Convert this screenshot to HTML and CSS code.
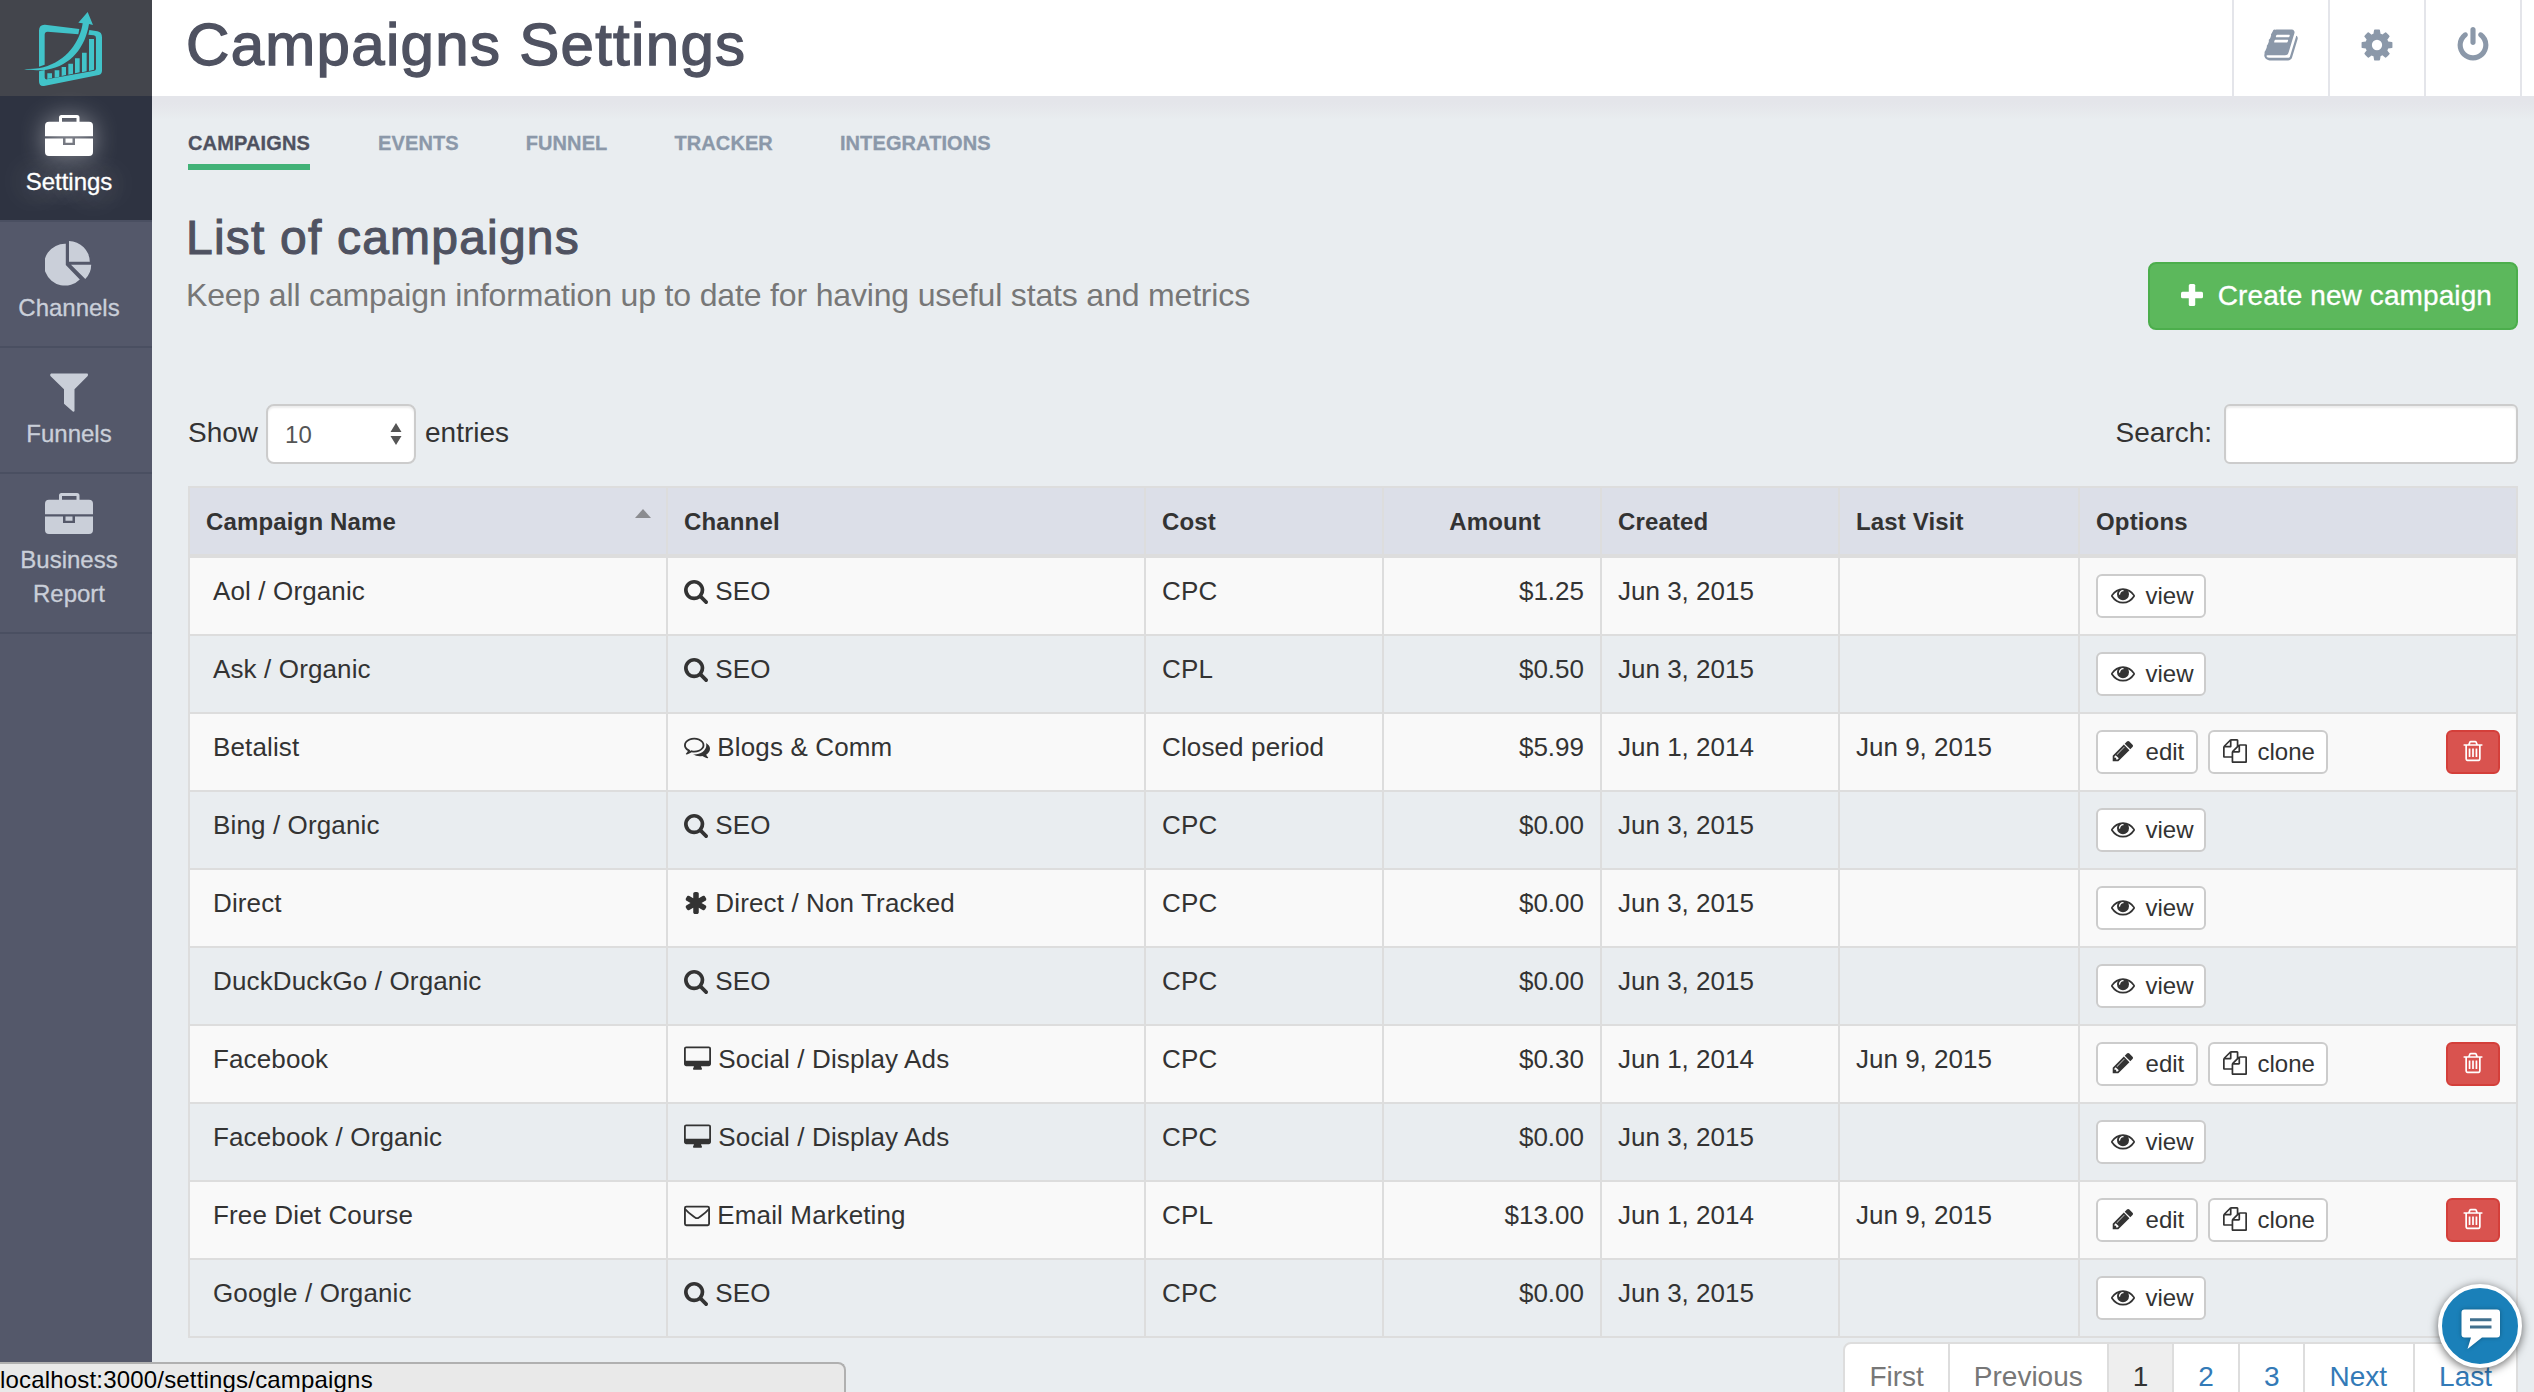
FILE: index.html
```html
<!DOCTYPE html>
<html lang="en">
<head>
<meta charset="utf-8">
<title>Campaigns Settings</title>
<link rel="stylesheet" href="styles.css">
</head>
<body>
<svg class="sprite" aria-hidden="true">
  <symbol id="i-search" viewBox="64 0 1664 1792"><path d="M1216 832q0-185-131.5-316.5t-316.5-131.5-316.5 131.5-131.5 316.5 131.5 316.5 316.5 131.5 316.5-131.5 131.5-316.5zm512 832q0 52-38 90t-90 38q-54 0-90-38l-343-342q-179 124-399 124-143 0-273.5-55.5t-225-150-150-225-55.5-273.5 55.5-273.5 150-225 225-150 273.5-55.5 273.5 55.5 225 150 150 225 55.5 273.5q0 220-124 399l343 343q37 37 37 90z"/></symbol>
  <symbol id="i-asterisk" viewBox="64 0 1664 1792"><path d="M1546 1050q46 26 59.5 77.5t-12.5 97.5l-64 110q-26 46-77.5 59.5t-97.5-12.5l-266-153v307q0 52-38 90t-90 38h-128q-52 0-90-38t-38-90v-307l-266 153q-46 26-97.5 12.5t-77.5-59.5l-64-110q-26-46-12.5-97.5t59.5-77.5l266-154-266-154q-46-26-59.5-77.5t12.5-97.5l64-110q26-46 77.5-59.5t97.5 12.5l266 153v-307q0-52 38-90t90-38h128q52 0 90 38t38 90v307l266-153q46-26 97.5-12.5t77.5 59.5l64 110q26 46 12.5 97.5t-59.5 77.5l-266 154z"/></symbol>
  <symbol id="i-comments" viewBox="0 0 1792 1792"><path d="M704 384q-153 0-286 52t-211.5 141-78.5 191q0 82 53 158t149 132l97 56-35 84q34-20 62-39l44-31 53 10q78 14 153 14 153 0 286-52t211.5-141 78.5-191-78.5-191-211.5-141-286-52zm0-128q191 0 353.5 68.5t256.5 186.5 94 257-94 257-256.5 186.5-353.5 68.5q-86 0-176-16-124 88-278 128-36 9-86 16h-3q-11 0-20.5-8t-11.5-21q-1-3-1-6.5t.5-6.5 2-6l2.5-5 3.5-5.500 4-5 4.500-5 4-4.500q5-6 23-25t26-29.500 22.500-29 25-38.500 20.500-44q-124-72-195-177t-71-224q0-139 94-257t256.500-186.500 353.500-68.500zm822 1169q10 24 20.500 44t25 38.500 22.500 29 26 29.500 23 25q1 1 4 4.500t4.500 5 4 5 3.500 5.500l2.500 5 2 6 .5 6.500-1 6.500q-3 14-13 22t-22 7q-50-7-86-16-154-40-278-128-90 16-176 16-271 0-472-132 58 4 88 4 161 0 309-45t264-129q125-92 192-212t67-254q0-77-23-152 129 71 204 178t75 230q0 120-71 224.500t-195 176.500z"/></symbol>
  <symbol id="i-desktop" viewBox="0 0 1920 1792"><path d="M1792 992v-832q0-13-9.5-22.5t-22.5-9.5h-1600q-13 0-22.5 9.5t-9.5 22.5v832q0 13 9.5 22.5t22.5 9.5h1600q13 0 22.5-9.5t9.5-22.5zm128-832v1088q0 66-47 113t-113 47h-544q0 37 16 77.5t32 71 16 43.5q0 26-19 45t-45 19h-512q-26 0-45-19t-19-45q0-14 16-44t32-70 16-78h-544q-66 0-113-47t-47-113v-1088q0-66 47-113t113-47h1600q66 0 113 47t47 113z"/></symbol>
  <symbol id="i-envelope" viewBox="0 0 1792 1792"><g fill="none" stroke="currentColor" stroke-width="128"><rect x="64" y="320" width="1664" height="1280" rx="96"/><path d="M90 500C300 760 560 900 760 1060Q896 1160 1032 1060C1232 900 1492 760 1702 500"/></g></symbol>
  <symbol id="i-eye" viewBox="0 0 1792 1792"><path d="M1664 960q-152-236-381-353 61 104 61 225 0 185-131.5 316.5t-316.5 131.5-316.5-131.5-131.5-316.5q0-121 61-225-229 117-381 353 133 205 333.5 326.5t434.5 121.5 434.5-121.5 333.5-326.5zm-720-384q0-20-14-34t-34-14q-125 0-214.5 89.5t-89.5 214.5q0 20 14 34t34 14 34-14 14-34q0-86 61-147t147-61q20 0 34-14t14-34zm848 384q0 34-20 69-140 230-376.5 368.5t-499.5 138.5-499.5-139-376.5-368q-20-35-20-69t20-69q140-229 376.5-368t499.5-139 499.5 139 376.5 368q20 35 20 69z"/></symbol>
  <symbol id="i-pencil" viewBox="0 0 1792 1792"><path d="M491 1536l91-91-235-235-91 91v107h128v128h107zm523-928q0-22-22-22-10 0-17 7l-542 542q-7 7-7 17 0 22 22 22 10 0 17-7l542-542q7-7 7-17zm-54-192l416 416-832 832h-416v-416zm683 96q0 53-37 90l-166 166-416-416 166-165q36-38 90-38 53 0 91 38l235 234q37 39 37 91z"/></symbol>
  <symbol id="i-files" viewBox="0 0 1792 1792"><path d="M1696 384q40 0 68 28t28 68v1216q0 40-28 68t-68 28h-960q-40 0-68-28t-28-68v-288h-544q-40 0-68-28t-28-68v-672q0-40 20-88t48-76l408-408q28-28 76-48t88-20h416q40 0 68 28t28 68v328q68-40 128-40h416zm-544 213l-299 299h299v-299zm-640-384l-299 299h299v-299zm196 647l316-316v-416h-384v416q0 40-28 68t-68 28h-416v640h512v-256q0-40 20-88t48-76zm956 804v-1152h-384v416q0 40-28 68t-68 28h-416v640h896z"/></symbol>
  <symbol id="i-trash" viewBox="0 0 1792 1792"><path d="M704 736v576q0 14-9 23t-23 9h-64q-14 0-23-9t-9-23v-576q0-14 9-23t23-9h64q14 0 23 9t9 23zm256 0v576q0 14-9 23t-23 9h-64q-14 0-23-9t-9-23v-576q0-14 9-23t23-9h64q14 0 23 9t9 23zm256 0v576q0 14-9 23t-23 9h-64q-14 0-23-9t-9-23v-576q0-14 9-23t23-9h64q14 0 23 9t9 23zm128 724v-948h-896v948q0 22 7 40.5t14.5 27 10.5 8.5h832q3 0 10.5-8.5t14.5-27 7-40.5zm-672-1076h448l-48-117q-7-9-17-11h-317q-10 2-17 11zm928 32v64q0 14-9 23t-23 9h-96v948q0 83-47 143.5t-113 60.5h-832q-66 0-113-58.5t-47-141.5v-952h-96q-14 0-23-9t-9-23v-64q0-14 9-23t23-9h309l70-167q15-37 54-63t79-26h320q40 0 79 26t54 63l70 167h309q14 0 23 9t9 23z"/></symbol>
  <symbol id="i-plus" viewBox="0 0 1792 1792"><rect x="192" y="690" width="1408" height="412" rx="96"/><rect x="690" y="192" width="412" height="1408" rx="96"/></symbol>
  <symbol id="i-book" viewBox="0 0 1792 1792"><path d="M1703 478q40 57 18 129l-275 906q-19 64-76.5 107.5t-122.5 43.5h-923q-77 0-148.5-53.5t-99.5-131.5q-24-67-2-127 0-4 3-27t4-37q1-8-3-21.5t-3-19.5q2-11 8-21t16.5-23.5 16.5-23.5q23-38 45-91.5t30-91.5q3-10 .5-30t-.5-28q3-11 17-28t17-23q21-36 42-92t25-90q1-9-2.5-32t.5-28q4-13 22-30.5t22-22.5q19-26 42.5-84.5t27.5-96.5q1-8-3-25.5t-2-26.5q2-8 9-18t18-23 17-21q8-12 16.5-30.5t15-35 16-36 19.5-32 26.5-23.5 36-11.5 47.5 5.5l-1 3q38-9 51-9h761q74 0 114 56t18 130l-274 906q-36 119-71.5 153.5t-128.5 34.5h-869q-27 0-38 15-11 16-1 43 24 70 144 70h923q29 0 56-15.5t35-41.5l300-987q7-22 5-57 38 15 59 43zm-1064 2q-4 13 2 22.5t20 9.5h608q13 0 25.5-9.5t16.5-22.5l21-64q4-13-2-22.5t-20-9.5h-608q-13 0-25.5 9.5t-16.5 22.5zm-83 256q-4 13 2 22.5t20 9.5h608q13 0 25.5-9.5t16.5-22.5l21-64q4-13-2-22.5t-20-9.5h-608q-13 0-25.5 9.5t-16.5 22.5z"/></symbol>
  <symbol id="i-cog" viewBox="0 0 1792 1792"><path d="M1152 896q0-106-75-181t-181-75-181 75-75 181 75 181 181 75 181-75 75-181zm512-109v222q0 12-8 23t-20 13l-185 28q-19 54-39 91 35 50 107 138 10 12 10 25t-9 23q-27 37-99 108t-94 71q-12 0-26-9l-138-108q-44 23-91 38-16 136-29 186-7 28-36 28h-222q-14 0-24.5-8.5t-11.5-21.5l-28-184q-49-16-90-37l-141 107q-10 9-25 9-14 0-25-11-126-114-165-168-7-10-7-23 0-12 8-23 15-21 51-66.5t54-70.5q-27-50-41-99l-183-27q-13-2-21-12.5t-8-23.5v-222q0-12 8-23t19-13l186-28q14-46 39-92-40-57-107-138-10-12-10-24 0-10 9-23 26-36 98.5-107.5t94.5-71.5q13 0 26 10l138 107q44-23 91-38 16-136 29-186 7-28 36-28h222q14 0 24.5 8.5t11.5 21.5l28 184q49 16 90 37l142-107q9-9 24-9 13 0 25 10 129 119 165 170 7 8 7 22 0 12-8 23-15 21-51 66.5t-54 70.5q26 50 41 98l183 28q13 2 21 12.5t8 23.5z"/></symbol>
  <symbol id="i-power" viewBox="0 0 1792 1792"><path d="M1664 896q0 156-61 298t-164 245-245 164-298 61-298-61-245-164-164-245-61-298q0-182 80.5-343t226.5-270q43-32 95.5-25t83.5 50q32 42 24.5 94.5t-49.5 84.5q-98 74-151.5 181t-53.5 228q0 104 40.5 198.5t109.5 163.5 163.5 109.5 198.5 40.5 198.5-40.5 163.5-109.5 109.5-163.5 40.5-198.5q0-121-53.5-228t-151.5-181q-42-32-49.5-84.5t24.5-94.5q31-43 84-50t95 25q146 109 226.5 270t80.5 343zm-640-768v640q0 52-38 90t-90 38-90-38-38-90v-640q0-52 38-90t90-38 90 38 38 90z"/></symbol>
  <symbol id="i-briefcase" viewBox="0 0 48 48"><path fill-rule="evenodd" d="M14 9.700V5.500Q14 3 16.500 3H32Q34.500 3 34.500 5.500V9.700H44Q48 9.700 48 13.700V24.300H0V13.700Q0 9.700 4 9.700ZM17 9.700H31.500V6H17ZM0 26.500H18V33H30V26.500H48V40Q48 44 44 44H4Q0 44 0 40ZM20.500 26.500H27.500V30.700H20.500Z"/></symbol>
  <symbol id="i-pie" viewBox="0 0 48 48"><path d="M20.800 5.800V27L34.800 41.400A20.900 20.900 0 1 1 20.800 5.800ZM24 3A21 21 0 0 1 44.800 23.800H24ZM26 26.800H46.200A20 20 0 0 1 40.300 41Z"/></symbol>
  <symbol id="i-funnel" viewBox="0 0 48 48"><path d="M6 9.500H42.500Q43.500 10.500 42.700 12L29.500 25.300V47Q29 48 27.800 47.500L19 39.700V25.300L5.400 12Q4.500 10.500 6 9.500Z"/></symbol>
</svg>

<div class="app">
  <nav class="sidebar">
    <a class="logo">
      <svg viewBox="0 0 456 288" width="152" height="96">
        <path d="M117 200V92Q117 73 135 74L238 87L235 103L143 95Q134 95 134 104V194Z"/>
        <path d="M268 90L292 94Q306 96 306 112V212Q306 222 296 225L132 258Q117 260 117 244V214L134 210V232Q134 239 141 238L283 212Q288 211 288 206V114Q288 107 281 106L265 104Z"/>
        <path d="M263 36L279 75L267 72C256 140 215 197 140 209C118 212 90 211 72 208C90 207 112 207 130 202C200 183 240 125 248 70L235 68Z"/>
        <path d="M142 220h14v14l-14 3zM164 211h14v19l-14 3zM185 201h13v24l-13 3zM205 191h14v30l-14 3zM225 175h14v42l-14 3zM246 158h14v56l-14 3zM267 117h15v92l-15 4z"/>
      </svg>
    </a>
    <a class="nav-item active"><svg class="nav-icon"><use href="#i-briefcase"/></svg><span>Settings</span></a>
    <a class="nav-item"><svg class="nav-icon"><use href="#i-pie"/></svg><span>Channels</span></a>
    <a class="nav-item"><svg class="nav-icon"><use href="#i-funnel"/></svg><span>Funnels</span></a>
    <a class="nav-item"><svg class="nav-icon"><use href="#i-briefcase"/></svg><span>Business<br>Report</span></a>
  </nav>

  <div class="page">
    <header class="topbar">
      <h1>Campaigns Settings</h1>
      <div class="tools">
        <a class="tool"><svg><use href="#i-book"/></svg></a>
        <a class="tool"><svg><use href="#i-cog"/></svg></a>
        <a class="tool"><svg><use href="#i-power"/></svg></a>
      </div>
    </header>

    <main class="content">
      <div class="tabs">
        <a class="tab current">CAMPAIGNS</a><a class="tab">EVENTS</a><a class="tab">FUNNEL</a><a class="tab">TRACKER</a><a class="tab">INTEGRATIONS</a>
      </div>

      <div class="heading">
        <div>
          <h2>List of campaigns</h2>
          <p>Keep all campaign information up to date for having useful stats and metrics</p>
        </div>
        <a class="create"><i class="fw"><svg class="fa"><use href="#i-plus"/></svg></i> Create new campaign</a>
      </div>

      <div class="controls">
        <label class="length">Show <span class="select">10<svg viewBox="0 0 12 22" width="12" height="22"><path d="M6 0L11.500 9H.5ZM6 22L11.500 13H.5Z"/></svg></span> entries</label>
        <label class="filter">Search:<input class="search" type="text"></label>
      </div>

      <table class="grid">
        <colgroup><col class="c-name"><col class="c-channel"><col class="c-cost"><col class="c-amount"><col class="c-created"><col class="c-visit"><col class="c-options"></colgroup>
        <thead>
          <tr><th><div class="sorted">Campaign Name<i class="caret"></i></div></th><th>Channel</th><th>Cost</th><th class="center">Amount</th><th>Created</th><th>Last Visit</th><th>Options</th></tr>
        </thead>
        <tbody>
          <tr><td>Aol / Organic</td><td><svg class="fa w24"><use href="#i-search"/></svg> SEO</td><td>CPC</td><td class="num">$1.25</td><td>Jun 3, 2015</td><td></td><td><div class="opts"><a class="btn"><i class="fw"><svg class="fa"><use href="#i-eye"/></svg></i> view</a></div></td></tr>
          <tr><td>Ask / Organic</td><td><svg class="fa w24"><use href="#i-search"/></svg> SEO</td><td>CPL</td><td class="num">$0.50</td><td>Jun 3, 2015</td><td></td><td><div class="opts"><a class="btn"><i class="fw"><svg class="fa"><use href="#i-eye"/></svg></i> view</a></div></td></tr>
          <tr><td>Betalist</td><td><svg class="fa"><use href="#i-comments"/></svg> Blogs &amp; Comm</td><td>Closed period</td><td class="num">$5.99</td><td>Jun 1, 2014</td><td>Jun 9, 2015</td><td><div class="opts"><a class="btn edit"><i class="fw"><svg class="fa"><use href="#i-pencil"/></svg></i> edit</a><a class="btn clone"><i class="fw"><svg class="fa"><use href="#i-files"/></svg></i> clone</a><a class="btn danger"><i class="fw"><svg class="fa"><use href="#i-trash"/></svg></i></a></div></td></tr>
          <tr><td>Bing / Organic</td><td><svg class="fa w24"><use href="#i-search"/></svg> SEO</td><td>CPC</td><td class="num">$0.00</td><td>Jun 3, 2015</td><td></td><td><div class="opts"><a class="btn"><i class="fw"><svg class="fa"><use href="#i-eye"/></svg></i> view</a></div></td></tr>
          <tr><td>Direct</td><td><svg class="fa w24"><use href="#i-asterisk"/></svg> Direct / Non Tracked</td><td>CPC</td><td class="num">$0.00</td><td>Jun 3, 2015</td><td></td><td><div class="opts"><a class="btn"><i class="fw"><svg class="fa"><use href="#i-eye"/></svg></i> view</a></div></td></tr>
          <tr><td>DuckDuckGo / Organic</td><td><svg class="fa w24"><use href="#i-search"/></svg> SEO</td><td>CPC</td><td class="num">$0.00</td><td>Jun 3, 2015</td><td></td><td><div class="opts"><a class="btn"><i class="fw"><svg class="fa"><use href="#i-eye"/></svg></i> view</a></div></td></tr>
          <tr><td>Facebook</td><td><svg class="fa w28"><use href="#i-desktop"/></svg> Social / Display Ads</td><td>CPC</td><td class="num">$0.30</td><td>Jun 1, 2014</td><td>Jun 9, 2015</td><td><div class="opts"><a class="btn edit"><i class="fw"><svg class="fa"><use href="#i-pencil"/></svg></i> edit</a><a class="btn clone"><i class="fw"><svg class="fa"><use href="#i-files"/></svg></i> clone</a><a class="btn danger"><i class="fw"><svg class="fa"><use href="#i-trash"/></svg></i></a></div></td></tr>
          <tr><td>Facebook / Organic</td><td><svg class="fa w28"><use href="#i-desktop"/></svg> Social / Display Ads</td><td>CPC</td><td class="num">$0.00</td><td>Jun 3, 2015</td><td></td><td><div class="opts"><a class="btn"><i class="fw"><svg class="fa"><use href="#i-eye"/></svg></i> view</a></div></td></tr>
          <tr><td>Free Diet Course</td><td><svg class="fa"><use href="#i-envelope"/></svg> Email Marketing</td><td>CPL</td><td class="num">$13.00</td><td>Jun 1, 2014</td><td>Jun 9, 2015</td><td><div class="opts"><a class="btn edit"><i class="fw"><svg class="fa"><use href="#i-pencil"/></svg></i> edit</a><a class="btn clone"><i class="fw"><svg class="fa"><use href="#i-files"/></svg></i> clone</a><a class="btn danger"><i class="fw"><svg class="fa"><use href="#i-trash"/></svg></i></a></div></td></tr>
          <tr><td>Google / Organic</td><td><svg class="fa w24"><use href="#i-search"/></svg> SEO</td><td>CPC</td><td class="num">$0.00</td><td>Jun 3, 2015</td><td></td><td><div class="opts"><a class="btn"><i class="fw"><svg class="fa"><use href="#i-eye"/></svg></i> view</a></div></td></tr>
        </tbody>
      </table>

      <div class="pager">
        <a class="off">First</a><a class="off">Previous</a><a class="on">1</a><a>2</a><a>3</a><a class="next">Next</a><a>Last</a>
      </div>
    </main>
  </div>
</div>

<div class="status">localhost:3000/settings/campaigns</div>
<div class="chat">
  <svg viewBox="0 0 76 76" width="76" height="76">
    <path class="bubble" d="M21 21.500H55Q58 21.500 58 24.500V46.500Q58 49.500 55 49.500H40L25.500 61L29 49.500H22.500Q19.500 49.500 19.500 46.500V24.500Q19.500 21.500 22.500 21.500Z"/>
    <path class="lines" d="M28 30.300H49.500V33.300H28ZM28 37.500H49.500V40.500H28Z"/>
  </svg>
</div>
</body>
</html>
```
FILE: styles.css
```css
* { box-sizing: border-box; }

body {
  margin: 0;
  height: 1392px;
  overflow: hidden;
  background: #e9edf0;
  color: #333;
  font-family: "Liberation Sans", Arial, sans-serif;
  font-size: 28px;
}

.sprite { display: none; }
svg { fill: currentColor; }

.app { display: flex; height: 1392px; }

/* sidebar */
.sidebar {
  flex: none;
  width: 152px;
  background: #54586a;
  color: #cacfd9;
}
.logo { display: block; height: 96px; background: #43454c; color: #41c3c9; }
.logo svg { display: block; }
.nav-item {
  display: flex;
  flex-direction: column;
  align-items: center;
  padding: 16px 14px 21px 0;
  border-bottom: 2px solid #4a4f61;
  font-size: 24px;
  line-height: 34px;
  text-align: center;
  -webkit-text-stroke: .3px currentColor;
}
.nav-icon { width: 48px; height: 48px; margin-bottom: 5px; stroke: none; overflow: visible; }
.nav-item.active {
  background: #2e3341;
  color: #fff;
  text-shadow: 0 0 30px rgba(255, 255, 255, .6);
}
.nav-item.active .nav-icon { filter: drop-shadow(0 0 12px rgba(255, 255, 255, .5)); }

/* top bar */
.page { flex: 1; min-width: 0; }
.topbar {
  display: flex;
  justify-content: space-between;
  height: 96px;
  padding: 0 12px 0 34px;
  background: #fff;
}
h1 {
  margin: 0;
  padding-top: 10px;
  font-size: 60px;
  line-height: 70px;
  font-weight: 400;
  letter-spacing: 1.3px;
  color: #4f5261;
  -webkit-text-stroke: 1.4px currentColor;
}
.tools { display: flex; border-right: 2px solid #e4e5ea; }
.tool {
  display: flex;
  justify-content: center;
  width: 96px;
  padding-top: 27px;
  border-left: 2px solid #e4e5ea;
  color: #8b98a9;
}
.tool svg { width: 36px; height: 36px; }

/* the strip under the top bar fades into the page colour */
.content {
  padding: 33px 16px 0 36px;
  background: linear-gradient(#e4e5ea 6px, #e6e8ec 14px, #e9edf0 24px);
}

/* tabs */
.tabs { display: flex; gap: 67px; }
.tab {
  padding-bottom: 7px;
  border-bottom: 6px solid transparent;
  font-size: 20px;
  line-height: 28px;
  font-weight: 700;
  letter-spacing: .1px;
  color: #8b98a9;
  -webkit-text-stroke: .3px currentColor;
}
.tab.current { margin-right: 1px; letter-spacing: .15px; color: #4f5261; border-color: #41b277; }

/* page heading */
.heading {
  display: flex;
  justify-content: space-between;
  align-items: flex-end;
  height: 119px;
  margin-top: 41px;
}
.heading > div { align-self: flex-start; margin-left: -2px; }
h2 {
  margin: 0 0 12px;
  font-size: 48px;
  line-height: 54px;
  font-weight: 400;
  letter-spacing: 1.2px;
  color: #4f5261;
  -webkit-text-stroke: 1.1px currentColor;
}
.heading p {
  margin: 0;
  font-size: 32px;
  line-height: 36px;
  letter-spacing: -.16px;
  color: #777;
}
.create {
  padding: 12px 24px;
  border: 2px solid #4cae4c;
  border-radius: 8px;
  background: #5cb85c;
  color: #fff;
  line-height: 40px;
  letter-spacing: .1px;
  -webkit-text-stroke: .3px currentColor;
}

/* icons that sit in a line of text */
.fa { width: 1em; height: 1em; vertical-align: -.143em; }
.w24 { width: 24px; }
.w28 { width: 27px; }
.fw { display: inline-block; width: 1.286em; text-align: center; }

/* table controls */
.controls { display: flex; justify-content: space-between; height: 60px; margin-top: 74px; line-height: 57px; }
.length, .filter { display: flex; }
.select {
  display: flex;
  justify-content: space-between;
  align-items: center;
  width: 150px;
  height: 60px;
  margin: 0 9px 0 8px;
  padding: 0 12px 0 17px;
  border: 2px solid #ccc;
  border-radius: 8px;
  background: #fff;
  box-shadow: inset 0 2px 2px rgba(0, 0, 0, .075);
  color: #555;
  font-size: 24px;
}
.search {
  width: 294px;
  height: 60px;
  margin: 0 0 0 12px;
  border: 2px solid #ccc;
  border-radius: 6px;
  background: #fff;
  box-shadow: inset 0 2px 2px rgba(0, 0, 0, .075);
}

/* campaigns table */
.grid {
  width: 2330px;
  margin-top: 22px;
  border-collapse: collapse;
  table-layout: fixed;
  font-size: 26px;
  line-height: 35px;
}
.c-name, .c-channel { width: 478px; }
.c-cost { width: 238px; }
.c-amount { width: 218px; }
.c-created { width: 238px; }
.c-visit { width: 240px; }
.c-options { width: 438px; }
.grid th, .grid td { border: 2px solid #ddd; text-align: left; vertical-align: top; }
.grid th {
  padding: 17px 16px 15px;
  border-bottom-width: 4px;
  background: #dcdfe8;
  font-size: 24px;
  line-height: 34px;
  letter-spacing: .15px;
}
.grid th.center { text-align: center; padding-left: 22px; }
.grid td { height: 76px; padding: 16px; }
.grid td:first-child { padding-left: 23px; }
.grid td:nth-child(-n+3) { letter-spacing: .13px; }
.grid td.num { text-align: right; }
.grid tbody tr:nth-child(odd) { background: #f9f9f9; }
.sorted { display: flex; justify-content: space-between; }
.caret {
  width: 0;
  height: 0;
  margin: 4px -1px 0 0;
  border: 8px solid transparent;
  border-top: 0;
  border-bottom: 9px solid #8b8c90;
}

.opts { display: flex; height: 44px; font-size: 24px; line-height: 36px; }
.btn {
  height: 44px;
  padding: 2px 10px;
  margin-right: 10px;
  border: 2px solid #ccc;
  border-radius: 6px;
  background: #fff;
  white-space: nowrap;
}
.btn.edit { width: 102px; }
.btn.clone { width: 120px; }
.btn.danger {
  width: 54px;
  margin: 0 0 0 auto;
  background: #d9534f;
  border-color: #d43f3a;
  color: #fff;
}

/* pagination */
.pager { display: flex; justify-content: flex-end; margin-top: 4px; }
.pager a {
  height: 68px;
  margin-left: -2px;
  padding: 12px 24px;
  border: 2px solid #ddd;
  background: #fff;
  color: #337ab7;
  line-height: 41px;
}
.pager a:first-child { border-radius: 8px 0 0 8px; }
.pager a:last-child { border-radius: 0 8px 8px 0; }
.pager .next { padding-right: 26px; }
.pager .off { color: #777; }
.pager .on { background: #eee; color: #333; }

/* browser status bubble, lies over the page */
.status {
  position: absolute;
  left: 0;
  bottom: 0;
  width: 846px;
  height: 30px;
  border: 2px solid #b0b0b0;
  border-width: 2px 2px 0 0;
  border-top-right-radius: 8px;
  background: #e9e9e9;
  color: #000;
  font-size: 24px;
  line-height: 32px;
  letter-spacing: .18px;
}

/* chat launcher, lies over the page */
.chat {
  position: absolute;
  left: 2438px;
  top: 1284px;
  width: 84px;
  height: 84px;
  border: 4px solid #fff;
  border-radius: 50%;
  background: #1a80b9;
  box-shadow: 0 2px 10px rgba(0, 0, 0, .6);
}
.chat svg { display: block; }
.bubble { fill: #fff; filter: drop-shadow(0 0 2px rgba(0, 0, 0, .3)); }
.lines { fill: #41708e; }
```
